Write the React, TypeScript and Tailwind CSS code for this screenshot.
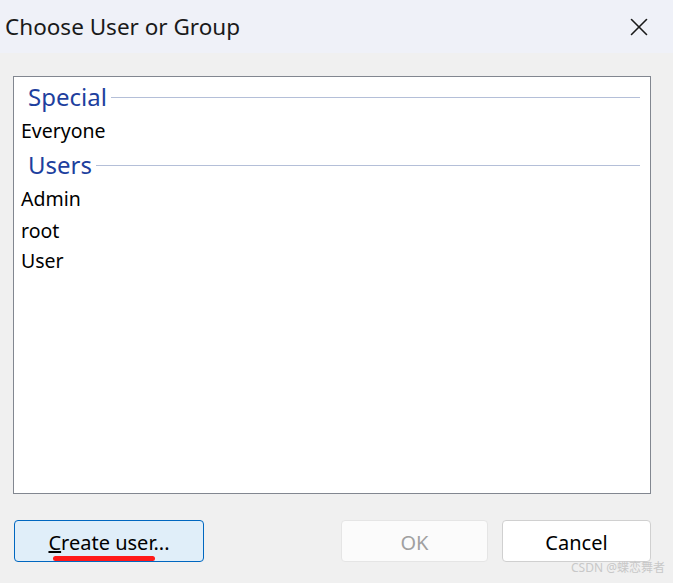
import { X } from "lucide-react"

const font = { fontFamily: '"Noto Sans", "Open Sans", sans-serif' }

function GroupHeader({ label }: { label: string }) {
  return (
    <div className="flex h-[34px] items-center pl-[14px] pr-[10px]">
      <span className="text-[24px] leading-none text-[#1e3f9e]">{label}</span>
      <div className="ml-[4px] h-px flex-1 bg-[#b4bfd8]" />
    </div>
  )
}

function Item({ label, first }: { label: string; first?: boolean }) {
  return (
    <div className={`flex items-center pl-[7px] text-[19.5px] text-black ${first ? "h-[34px]" : "h-[30px]"}`}>
      {label}
    </div>
  )
}

export default function App() {
  return (
    <div
      className="relative flex h-[583px] w-[673px] flex-col overflow-hidden bg-[#f0f0f0]"
      style={font}
    >
      {/* title bar */}
      <div className="flex h-[53px] items-center justify-between bg-[#eff1f8] pl-[5px] pr-[19px]">
        <span className="text-[22.5px] text-[#1a1a1a]">Choose User or Group</span>
        <X className="h-[30px] w-[30px] text-[#1a1a1a]" strokeWidth={1.3} />
      </div>

      {/* list */}
      <div className="ml-[13px] mr-[22px] mt-[23px] h-[418px] border border-[#828790] bg-white pt-[3px]">
        <GroupHeader label="Special" />
        <Item label="Everyone" first />
        <GroupHeader label="Users" />
        <Item label="Admin" first />
        <Item label="root" />
        <Item label="User" />
      </div>

      {/* buttons */}
      <div className="mt-[26px] flex items-center pl-[14px] pr-[22px]">
        <button className="relative flex h-[42px] w-[190px] items-center justify-center rounded-[4px] border border-[#0067c0] bg-[#e0eef9] pt-[3px] text-[20px] text-black">
          <span>
            <span className="underline underline-offset-[1px]">C</span>reate user...
          </span>
          <span className="absolute left-[38px] top-[35px] h-[5px] w-[102px] rounded-full bg-[#ff1a1a]" />
        </button>
        <div className="flex-1" />
        <button className="flex h-[42px] w-[147px] items-center justify-center rounded-[4px] border border-[#e5e5e5] bg-[#fbfbfb] pt-[3px] text-[20px] text-[#a0a0a0]">
          OK
        </button>
        <button className="ml-[14px] flex h-[42px] w-[149px] items-center justify-center rounded-[4px] border border-[#d0d0d0] bg-white pt-[3px] text-[20px] text-black">
          Cancel
        </button>
      </div>

      <span
        className="absolute bottom-[6px] right-[8px] text-[12px] text-[#c8c8c8]"
        style={{ fontFamily: '"Noto Sans", "Noto Sans CJK SC", sans-serif' }}
      >
        CSDN @蝶恋舞者
      </span>
    </div>
  )
}
